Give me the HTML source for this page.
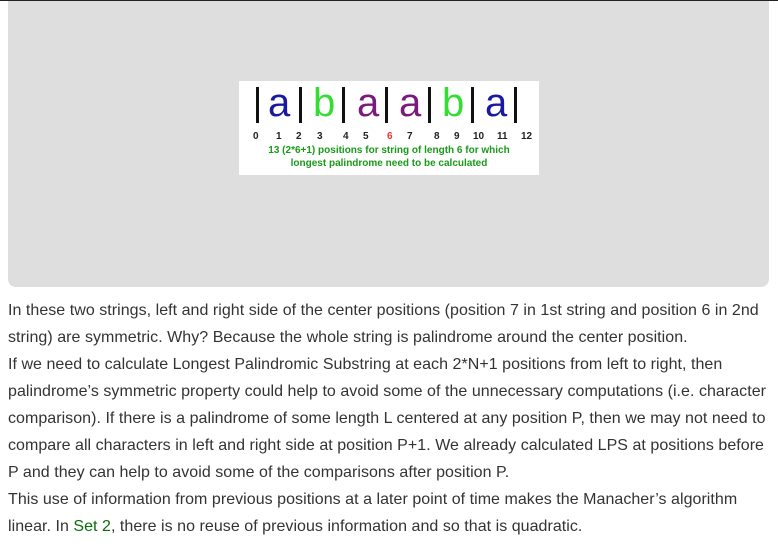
<!DOCTYPE html>
<html><head><style>
body{margin:0;width:778px;height:552px;background:#fff;overflow:hidden;font-family:"Liberation Sans",sans-serif;position:relative}
.top{position:absolute;left:0;top:0;width:778px;height:1px;background:#222}
.box{position:absolute;left:8px;top:1px;width:761px;height:286px;background:#dedede;border-radius:0 0 8px 8px}
.img{position:absolute;left:239px;top:81px;width:300px;height:94px;background:#fff}
.letters{position:absolute;left:12px;top:0;font-size:40px;height:44px;line-height:44px;white-space:nowrap}
.letters span{position:absolute;top:0}
.bar{position:absolute;top:6px;width:3px;height:36px;background:#111}
.num{position:absolute;top:50px;font-size:10px;font-weight:bold;color:#222}
.cap{position:absolute;left:0;width:300px;text-align:center;font-size:10px;font-weight:bold;color:#1a9a1a}
.txt{position:absolute;left:8px;top:297px;width:770px;font-size:16px;line-height:27px;color:#333;letter-spacing:0.04px}
.txt a{color:#0a6b0a;text-decoration:none}
</style></head><body>
<div class="top"></div>
<div class="box"></div>
<div class="img">
<div class="bar" style="left:17px"></div>
<div class="bar" style="left:60px"></div>
<div class="bar" style="left:103px"></div>
<div class="bar" style="left:146px"></div>
<div class="bar" style="left:189px"></div>
<div class="bar" style="left:232px"></div>
<div class="bar" style="left:275px"></div>
<div class="letters">
<span style="left:17px;color:#1a1aa0">a</span>
<span style="left:62px;color:#33dd33">b</span>
<span style="left:106px;color:#7a1a7a">a</span>
<span style="left:148px;color:#7a1a7a">a</span>
<span style="left:191px;color:#33dd33">b</span>
<span style="left:234px;color:#1a1aa0">a</span>
</div>
<span class="num" style="left:14px">0</span>
<span class="num" style="left:37px">1</span>
<span class="num" style="left:57px">2</span>
<span class="num" style="left:78px">3</span>
<span class="num" style="left:104px">4</span>
<span class="num" style="left:124px">5</span>
<span class="num" style="left:148px;color:#e33">6</span>
<span class="num" style="left:168px">7</span>
<span class="num" style="left:195px">8</span>
<span class="num" style="left:215px">9</span>
<span class="num" style="left:234px">10</span>
<span class="num" style="left:258px">11</span>
<span class="num" style="left:282px">12</span>
<div class="cap" style="top:64px">13 (2*6+1) positions for string of length 6 for which</div>
<div class="cap" style="top:77px">longest palindrome need to be calculated</div>
</div>
<div class="txt">In these two strings, left and right side of the center positions (position 7 in 1st string and position 6 in 2nd string) are symmetric. Why? Because the whole string is palindrome around the center position.<br>If we need to calculate Longest Palindromic Substring at each 2*N+1 positions from left to right, then palindrome’s symmetric property could help to avoid some of the unnecessary computations (i.e. character comparison). If there is a palindrome of some length L centered at any position P, then we may not need to compare all characters in left and right side at position P+1. We already calculated LPS at positions before P and they can help to avoid some of the comparisons after position P.<br>This use of information from previous positions at a later point of time makes the Manacher’s algorithm linear. In <a>Set 2</a>, there is no reuse of previous information and so that is quadratic.</div>
</body></html>
